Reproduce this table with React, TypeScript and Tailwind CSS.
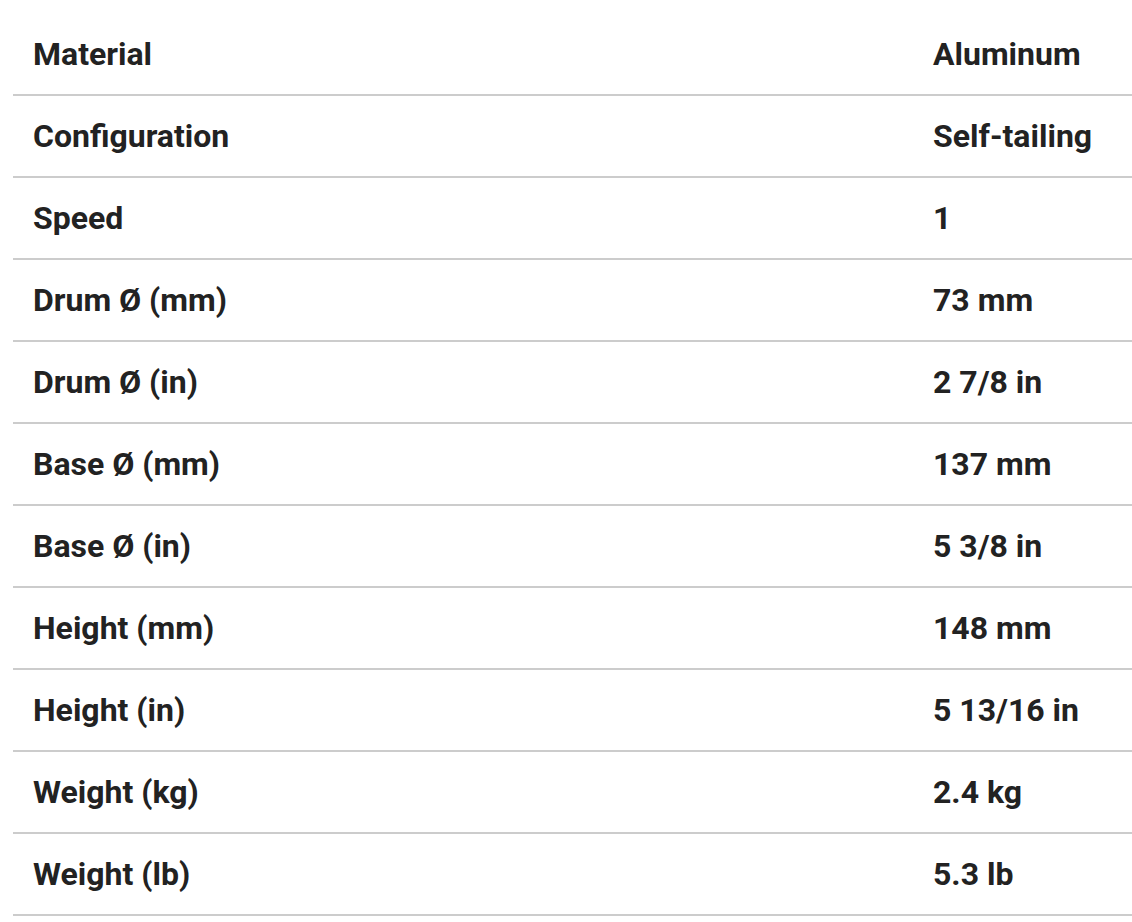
import React from "react";

const specs: [string, string][] = [
  ["Material", "Aluminum"],
  ["Configuration", "Self-tailing"],
  ["Speed", "1"],
  ["Drum Ø (mm)", "73 mm"],
  ["Drum Ø (in)", "2 7/8 in"],
  ["Base Ø (mm)", "137 mm"],
  ["Base Ø (in)", "5 3/8 in"],
  ["Height (mm)", "148 mm"],
  ["Height (in)", "5 13/16 in"],
  ["Weight (kg)", "2.4 kg"],
  ["Weight (lb)", "5.3 lb"],
];

export default function App() {
  return (
    <div className="min-h-screen bg-white pt-[14px] pl-[13px] font-['Roboto',sans-serif] text-[#222]">
      {specs.map(([label, value]) => (
        <div
          key={label}
          className="flex h-[82px] items-center border-b-2 border-[#cccccc] text-[32px] font-bold"
        >
          <div className="w-[900px] pl-[20px]">{label}</div>
          <div className="pl-[20px]">{value}</div>
        </div>
      ))}
    </div>
  );
}
